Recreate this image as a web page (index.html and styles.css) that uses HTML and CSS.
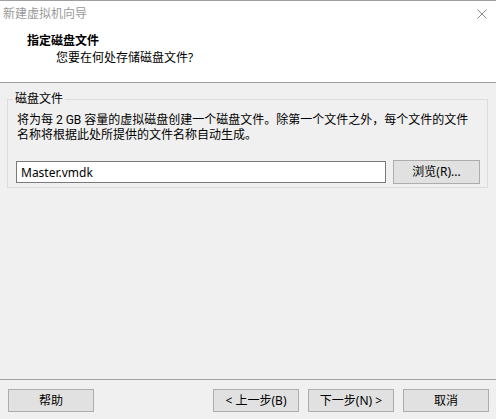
FILE: index.html
```html
<!DOCTYPE html>
<html lang="zh-CN">
<head>
  <meta charset="UTF-8" />
  <meta name="viewport" content="width=device-width, initial-scale=1.0"/>
  <title>新建虚拟机向导</title>
  <link rel="stylesheet" href="styles.css">
</head>
<body>
  <div class="wizard">
    <div class="header">
      <div class="titlebar">
        <span class="title">新建虚拟机向导</span>
        <svg class="close" width="10" height="10" viewBox="0 0 10 10">
          <path d="M0.5 0.5 L9.5 9.5 M9.5 0.5 L0.5 9.5" stroke="#8a8a8a" stroke-width="1" fill="none"/>
        </svg>
      </div>
      <div class="heading">指定磁盘文件</div>
      <div class="subheading">您要在何处存储磁盘文件?</div>
    </div>

    <div class="content">
      <fieldset class="group">
        <legend>磁盘文件</legend>
        <p class="info">将为每 2 GB 容量的虚拟磁盘创建一个磁盘文件。除第一个文件之外，每个文件的文件<br>名称将根据此处所提供的文件名称自动生成。</p>
        <div class="file-row">
          <input type="text" class="file-input" value="Master.vmdk">
          <button class="btn">浏览(R)...</button>
        </div>
      </fieldset>
    </div>

    <div class="footer">
      <button class="btn help">帮助</button>
      <button class="btn">&lt; 上一步(B)</button>
      <button class="btn">下一步(N) &gt;</button>
      <button class="btn">取消</button>
    </div>
  </div>
</body>
</html>
```

FILE: styles.css
```css
body {
  margin: 0;
  font-family: "Noto Sans", "Noto Sans CJK SC", sans-serif;
  font-size: 12px;
  color: #000;
  background: #f0f0f0;
}
.wizard {
  display: flex;
  flex-direction: column;
  height: 419px;
}
.header {
  background: white;
  border-top: 1px solid #a0a0a0;
  border-bottom: 1px solid #a0a0a0;
  padding-bottom: 16px;
}
.titlebar {
  display: flex;
  justify-content: space-between;
  align-items: center;
  height: 26px;
  padding: 0 9px 0 3px;
}
.title {
  color: #999;
  line-height: 16px;
}
.close {
  display: block;
}
.heading {
  font-weight: bold;
  line-height: 16px;
  margin-top: 6px;
  padding-left: 27px;
}
.subheading {
  line-height: 16px;
  margin-top: 1px;
  padding-left: 56px;
}
.content {
  flex: 1;
}
.group {
  margin: 9px 8px 0 7px;
  padding: 0 7px 3px 8px;
  border: 1px solid #dcdcdc;
}
.group legend {
  line-height: 14px;
  padding: 0 2px;
  margin-left: -3px;
}
.info {
  margin: 7px 0 0 1px;
  font-family: Roboto, "Noto Sans CJK SC", sans-serif;
  line-height: 15px;
}
.file-row {
  display: flex;
  align-items: center;
  gap: 7px;
  margin-top: 17px;
}
.file-input {
  flex: 1;
  height: 22px;
  box-sizing: border-box;
  margin: 0;
  border: 1px solid #7a7a7a;
  padding: 0 4px;
  font: inherit;
  background: white;
  outline: none;
}
.btn {
  width: 86px;
  height: 23px;
  margin: 0;
  padding: 0;
  border: 1px solid #adadad;
  background: #e1e1e1;
  font: inherit;
  color: #000;
  line-height: 16px;
}
.file-row .btn {
  width: 87px;
  height: 24px;
}
.footer {
  display: flex;
  gap: 9px;
  border-top: 1px solid #a0a0a0;
  padding: 9px 7px 7px 8px;
}
.help {
  margin-right: auto;
}
```
